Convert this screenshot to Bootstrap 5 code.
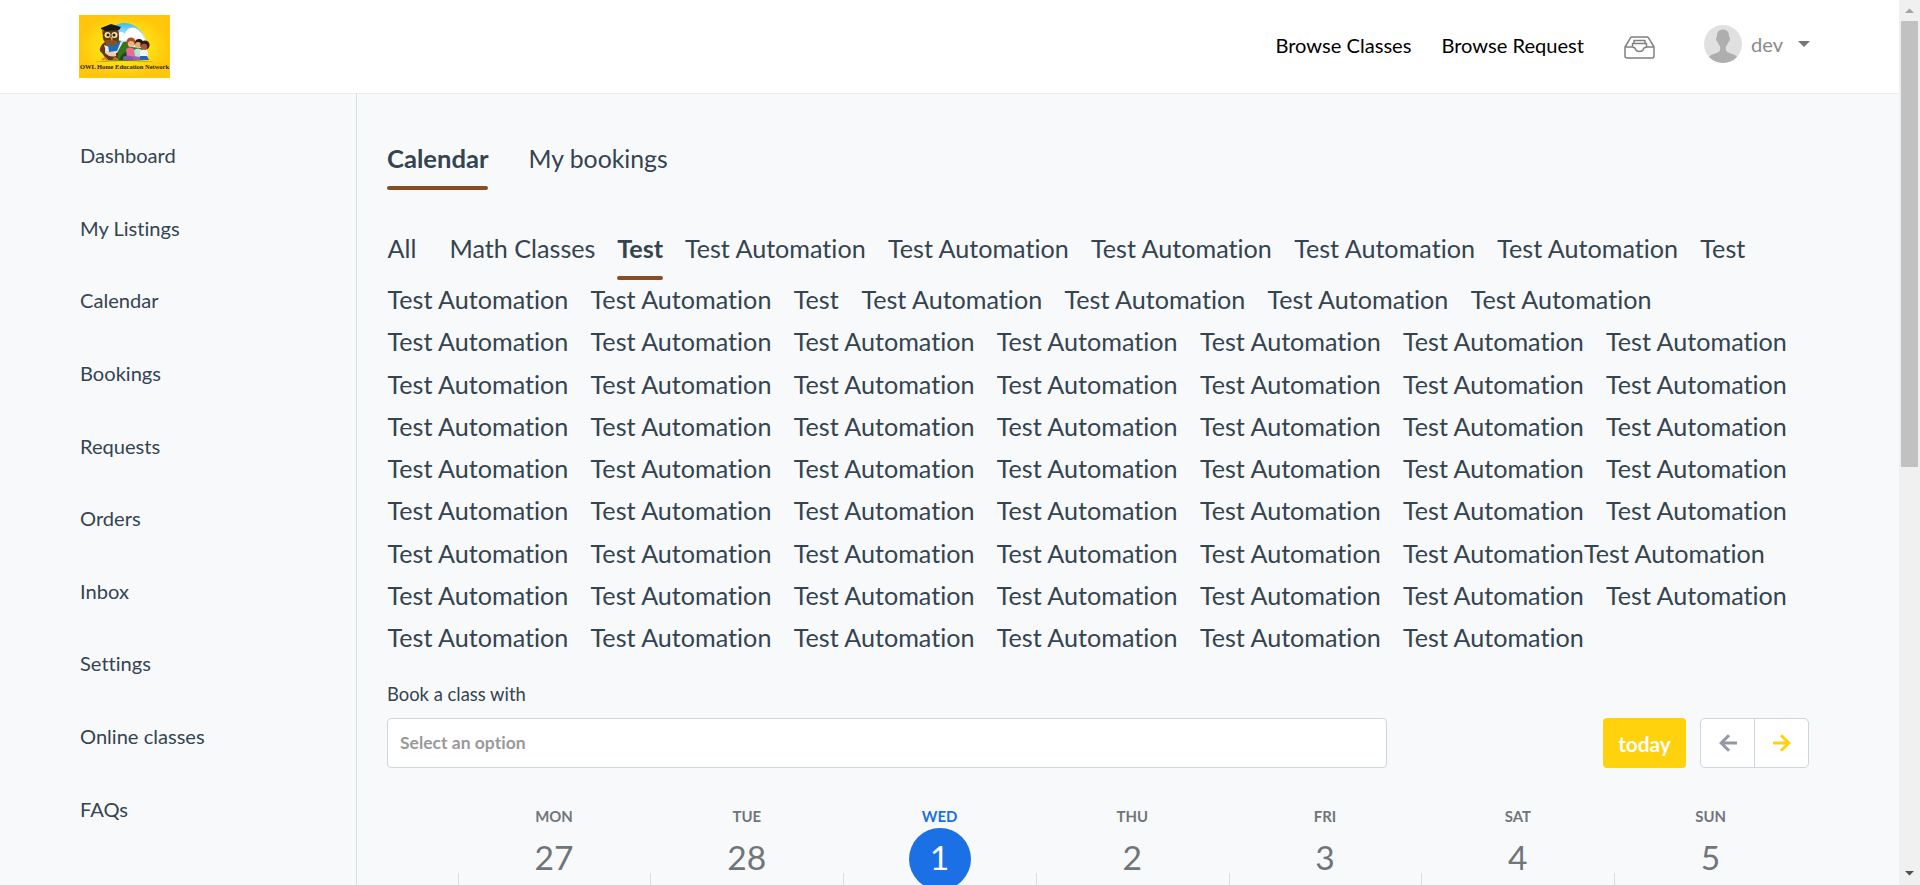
<!DOCTYPE html>
<html lang="en">
<head>
<meta charset="utf-8">
<meta name="viewport" content="width=device-width, initial-scale=1">
<title>OWL Home Education Network</title>
<link href="https://cdn.jsdelivr.net/npm/bootstrap@5.3.0/dist/css/bootstrap.min.css" rel="stylesheet">
<style>
body{font-family:Lato,"Liberation Sans",sans-serif;background:#f8f9fb;color:#344450;overflow:hidden;font-variant-ligatures:none}
.page{height:885px}
.topbar{height:94px;background:#fff;border-bottom:1px solid #ececec;padding:0 89px 4px 79px;color:#000;font-size:20.1px}
.browse{gap:30px;margin:2px 40px 0 0}
.browse a,.side a{color:inherit;text-decoration:none;white-space:nowrap}
.tray{margin:6px 49px 0 0}
.user{color:#8a8a8a}
.avatar{margin:-2px 9px 0 0}
.caret{margin:-1px 0 0 15px}
.side{width:357px;border-right:1px solid #d3dee6;padding:25px 0 0 80px;font-size:20.1px}
.side a{height:72.6px}
.main-area{padding:42px 90px 0 30px;min-width:0}
.tabs{font-size:24.8px;gap:40px;line-height:45px;height:54px}
.tabs .active-tab{font-size:25.6px;line-height:44px}
.active-tab{font-weight:700;position:relative}
.active-tab::after{content:"";position:absolute;left:0;right:0;bottom:0;height:4px;background:#874d24;border-radius:2px}
.cats{font-size:25.15px;line-height:42.3px;margin-top:37px;padding-left:.5px;white-space:nowrap}
.cats>div{height:42.3px;gap:22px}
.cats>.first-row{height:53px;margin-bottom:-2.1px}
.cats span{flex:none;width:181.1px}
.cats .w-all{width:40px}
.cats .w-math{width:145.7px}
.cats .w-test{width:45.7px}
.cats .joined{width:362px}
.booklabel{font-size:18.4px;line-height:28px;margin:21.800px 0 10px}
.pick{width:1000px;height:50px;border:1px solid #ccd6dd;border-radius:4px;background:#fff;color:#999;font-weight:700;font-size:17.5px;padding-left:12px}
.today{width:83px;height:50px;background:#ffd20d;color:#fff;font-weight:700;font-size:20.8px;border-radius:4px}
.arrows{width:109px;height:50px;border:1px solid #ccd6dd;border-radius:5px;background:#fff;margin-left:14px}
.arrows span+span{border-left:1px solid #ccd6dd}
.days{margin:38px 2px 0 70.600px;height:78px}
.day{flex:1 1 0;color:#70757a;font-size:14.9px;font-weight:700;line-height:20px;position:relative}
.day b{display:flex;width:62px;height:62px;margin:2px auto 0;padding-bottom:5px;align-items:center;justify-content:center;font-weight:400;font-size:33.6px;border-radius:50%}
.day.now{color:#1a70e4}
.day.now b{background:#1a70e4;color:#fff}
.day::before{content:"";position:absolute;left:0;top:67px;height:20px;width:1px;background:#dadce0}
.scroller{width:21px;background:#f0f0f0}
.thumb{width:17px;height:446px;background:#c1c1c1;margin:8px 0 0 2px}
</style>
</head>
<body>
<div class="d-flex page overflow-hidden">
<div class="flex-grow-1 d-flex flex-column overflow-hidden">
<header class="topbar d-flex align-items-center justify-content-between flex-shrink-0">
<svg class="mt-1" width="91" height="63" viewBox="0 0 91 63">
<defs><radialGradient id="sun"><stop offset="0" stop-color="#ffe81a"/><stop offset=".6" stop-color="#ffdc12"/><stop offset="1" stop-color="#ffc60b"/></radialGradient>
<linearGradient id="sky" x2="0" y2="1"><stop offset="0" stop-color="#3db9ee"/><stop offset=".35" stop-color="#b9e8fa"/><stop offset=".6" stop-color="#fff"/></linearGradient></defs>
<rect width="91" height="63" fill="url(#sun)"/>
<path d="M27 45C22 22 32 8 45 8S69 20 68 34L66 45Z" fill="url(#sky)"/>
<path d="M38 19q4-4 8 0q3-8 10-6q8 3 11 17q-14-8-27-4z" fill="#fff"/>
<path d="M37 45V27q4-3 7 0q7-2 9 5l10 1v12z" fill="#35751d"/><path d="M40 45q3-8 10-9l3 9z" fill="#174b12"/>
<path d="M15 47q30-4 61 0q-30-2-61 0z" fill="#5d7410"/>
<path d="M25 15q-3 8 1 12q-6 4-5 9q3 3 4 5q3 3 4 4h9q2-8 1-13q2-12 0-17z" fill="#623819"/>
<path d="M26 34l11 1v6q-6 2-11-3z" fill="#e9cfb0"/>
<path d="M26 25q6-1 12 1l1 5H27z" fill="#85512a"/>
<path d="M22 13l10-4 10 3-2 3-13 1-5-2z" fill="#151719"/><path d="M24 14v5" stroke="#332811"/>
<circle cx="28.5" cy="20" r="3" fill="#f5e5a4"/><circle cx="35.5" cy="20" r="3" fill="#f5e5a4"/><circle cx="29" cy="20" r="1.5" fill="#252018"/><circle cx="35" cy="20" r="1.5" fill="#252018"/><path d="M31 22l2 4 1-4z" fill="#eaa425"/>
<path d="M25 30l8 3 9-7 2 1-6 11-11-2z" fill="#e9edf0"/><path d="M29 30l5 1 8-5-4 10-8 1z" fill="#1c6fb4"/>
<path d="M23 45l3-2 2 2M34 45l2-2 3 2" stroke="#e4731b" stroke-width="1.6" fill="none"/>
<circle cx="52" cy="27" r="4.5" fill="#b84824"/><circle cx="52" cy="29" r="3.1" fill="#f4b48a"/><path d="M47 34q4-3 8 0l1 9h-8z" fill="#ed6c91"/>
<circle cx="60" cy="28" r="4" fill="#25180f"/><circle cx="59" cy="30" r="3" fill="#eda878"/><path d="M55 35q4-3 8 0v8h-7z" fill="#b9e2df"/>
<circle cx="66" cy="30" r="4.6" fill="#361c10"/><circle cx="65" cy="32" r="3.2" fill="#a45b31"/><path d="M61 36q5-3 8 1v6h-8z" fill="#ecf4f7"/>
<path d="M44 42q6-3 12 1v2H44z" fill="#805ab1"/><path d="M54 41l7 1v3h-7z" fill="#9a62b1"/><path d="M61 41h7l2 4h-9z" fill="#2864aa"/>
<text x="1" y="54" font-size="6.6" textLength="89" lengthAdjust="spacingAndGlyphs" font-weight="700" font-family="Liberation Serif, serif" fill="#28270f">OWL Home Education Network</text></svg>
<div class="d-flex align-items-center">
<nav class="d-flex browse"><a href="#">Browse Classes</a><a href="#">Browse Request</a></nav>
<svg class="tray" width="31" height="23" viewBox="0 0 31 23" fill="none" stroke="#808080" stroke-width="1.5" stroke-linejoin="round"><path d="M1 11L6.5 1.8Q7 1 8 1H23Q24 1 24.500 1.800L30 11V20Q30 22 28 22H3Q1 22 1 20V11H8.500M30 11H22.500L20 12Q19 15.500 15.500 15.500T11 12L8.500 11M8.500 10.500V7.500H22.500V10.500M10 7.500V4.500H21V7.500"/></svg>
<div class="user d-flex align-items-center">
<svg class="avatar" width="38" height="38" viewBox="0 0 38 38"><defs><clipPath id="round"><circle cx="19" cy="19" r="19"/></clipPath></defs><g clip-path="url(#round)"><rect width="38" height="38" fill="#e0e0e0"/><path d="M19 4.500C14.800 4.500 12.500 7.500 13 12Q11.500 12 12.300 15Q12.700 17 13.800 17.200Q14.500 20 16.200 21.500V25Q15.500 27 11 28.500Q6 30 5 32V38H33V32Q32 30 27 28.500Q22.500 27 21.800 25V21.500Q23.500 20 24.200 17.200Q25.300 17 25.700 15Q26.500 12 25 12C25.500 7.500 23.200 4.500 19 4.500Z" fill="#aeaeae"/></g></svg>
<span>dev</span><svg class="caret" width="12" height="6" viewBox="0 0 12 6"><path d="M0 0H12L6 6Z" fill="#777"/></svg></div>
</div>
</header>
<div class="d-flex flex-grow-1">
<aside class="side flex-shrink-0"><nav class="d-flex flex-column"><a class="d-flex align-items-center" href="#">Dashboard</a><a class="d-flex align-items-center" href="#">My Listings</a><a class="d-flex align-items-center" href="#">Calendar</a><a class="d-flex align-items-center" href="#">Bookings</a><a class="d-flex align-items-center" href="#">Requests</a><a class="d-flex align-items-center" href="#">Orders</a><a class="d-flex align-items-center" href="#">Inbox</a><a class="d-flex align-items-center" href="#">Settings</a><a class="d-flex align-items-center" href="#">Online classes</a><a class="d-flex align-items-center" href="#">FAQs</a></nav></aside>
<main class="main-area flex-grow-1">
<div class="tabs d-flex"><span class="active-tab">Calendar</span><span>My bookings</span></div>
<div class="cats">
<div class="d-flex first-row"><span class="w-all">All</span><span class="w-math">Math Classes</span><span class="w-test active-tab">Test</span><span>Test Automation</span><span>Test Automation</span><span>Test Automation</span><span>Test Automation</span><span>Test Automation</span><span class="w-test">Test</span></div>
<div class="d-flex"><span>Test Automation</span><span>Test Automation</span><span class="w-test">Test</span><span>Test Automation</span><span>Test Automation</span><span>Test Automation</span><span>Test Automation</span></div>
<div class="d-flex"><span>Test Automation</span><span>Test Automation</span><span>Test Automation</span><span>Test Automation</span><span>Test Automation</span><span>Test Automation</span><span>Test Automation</span></div>
<div class="d-flex"><span>Test Automation</span><span>Test Automation</span><span>Test Automation</span><span>Test Automation</span><span>Test Automation</span><span>Test Automation</span><span>Test Automation</span></div>
<div class="d-flex"><span>Test Automation</span><span>Test Automation</span><span>Test Automation</span><span>Test Automation</span><span>Test Automation</span><span>Test Automation</span><span>Test Automation</span></div>
<div class="d-flex"><span>Test Automation</span><span>Test Automation</span><span>Test Automation</span><span>Test Automation</span><span>Test Automation</span><span>Test Automation</span><span>Test Automation</span></div>
<div class="d-flex"><span>Test Automation</span><span>Test Automation</span><span>Test Automation</span><span>Test Automation</span><span>Test Automation</span><span>Test Automation</span><span>Test Automation</span></div>
<div class="d-flex"><span>Test Automation</span><span>Test Automation</span><span>Test Automation</span><span>Test Automation</span><span>Test Automation</span><span class="joined d-flex"><span>Test Automation</span><span>Test Automation</span></span></div>
<div class="d-flex"><span>Test Automation</span><span>Test Automation</span><span>Test Automation</span><span>Test Automation</span><span>Test Automation</span><span>Test Automation</span><span>Test Automation</span></div>
<div class="d-flex"><span>Test Automation</span><span>Test Automation</span><span>Test Automation</span><span>Test Automation</span><span>Test Automation</span><span>Test Automation</span></div>
</div>
<div class="booklabel">Book a class with</div>
<div class="d-flex"><div class="pick d-flex align-items-center">Select an option</div><div class="today ms-auto d-flex align-items-center justify-content-center">today</div>
<div class="arrows d-flex"><span class="flex-fill d-flex align-items-center justify-content-center"><svg width="18" height="18" viewBox="0 0 18 18" fill="none" stroke="#9299a3" stroke-width="3"><path d="M10 1.200L2.200 9L10 16.800M2.500 9H18"/></svg></span><span class="flex-fill d-flex align-items-center justify-content-center"><svg width="18" height="18" viewBox="0 0 18 18" fill="none" stroke="#ffd20d" stroke-width="3"><path d="M8 1.200L15.800 9L8 16.800M15.500 9H0"/></svg></span></div></div>
<div class="days d-flex text-center"><div class="day">MON<b>27</b></div><div class="day">TUE<b>28</b></div><div class="day now">WED<b>1</b></div><div class="day">THU<b>2</b></div><div class="day">FRI<b>3</b></div><div class="day">SAT<b>4</b></div><div class="day">SUN<b>5</b></div></div>
</main>
</div>
</div>
<div class="scroller d-flex flex-column flex-shrink-0">
<svg width="21" height="13" viewBox="0 0 21 13" class="flex-shrink-0"><path d="M6 13L10.500 8.500L15 13Z" fill="#a3a3a3"/></svg>
<div class="thumb"></div>
<svg width="21" height="18" viewBox="0 0 21 18" class="mt-auto flex-shrink-0"><path d="M6 4H15L10.500 8.500Z" fill="#505050"/></svg>
</div>
</div>
<script src="https://cdn.jsdelivr.net/npm/bootstrap@5.3.0/dist/js/bootstrap.bundle.min.js"></script>
</body>
</html>
